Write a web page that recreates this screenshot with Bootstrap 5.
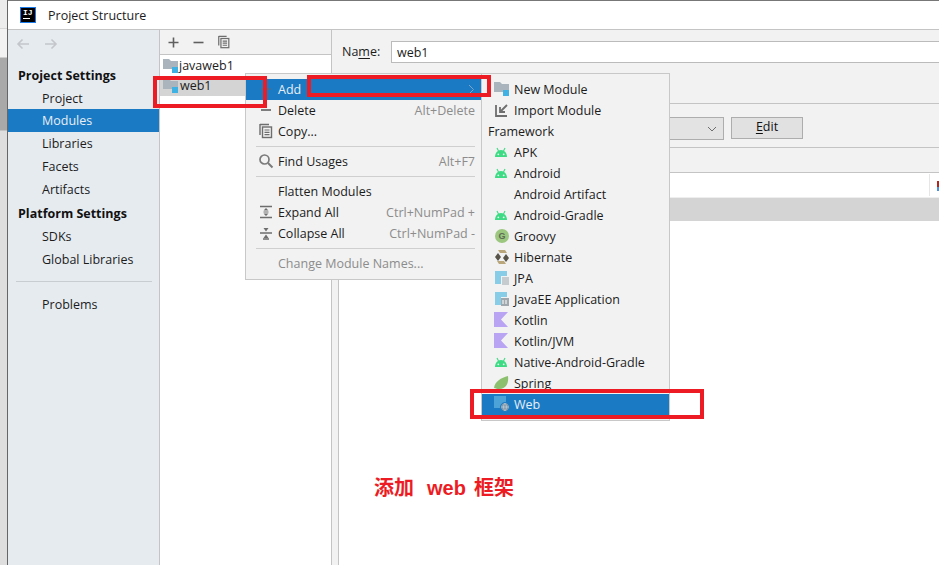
<!DOCTYPE html>
<html lang="en">
<head>
<meta charset="utf-8">
<title>Project Structure</title>
<link href="https://cdn.jsdelivr.net/npm/bootstrap@5.3.0/dist/css/bootstrap.min.css" rel="stylesheet">
<style>
html,body{height:565px;overflow:hidden}
body{font-family:"Open Sans","Noto Sans",sans-serif;font-size:12.5px;line-height:21px;color:#1c1c1c;background:#fff;position:relative}
.frame{height:565px}
.edge{width:8px;flex:none;border-right:1px solid #666;background:linear-gradient(#ececec 0,#ececec 28px,#bbb 28px,#f2f2f2 29px,#f2f2f2 57px,#a9a9a9 58px,#a9a9a9 130px,#dedede 131px)}
.win{min-width:0}
.titlebar{height:30px;flex:none;background:#fff;border-top:1px solid #777;border-bottom:1px solid #c4c4c4;padding-left:12px;gap:12px}
.ij{width:16px;height:16px;background:#000;border:1px solid #1a7bea;color:#fff;font:bold 8px/9px "Liberation Mono",monospace;padding:0 0 0 2px;position:relative;flex:none}
.ij::after{content:"";position:absolute;left:2px;top:10px;width:7px;height:1px;background:#fff}
.sidenav{width:152px;flex:none;background:#e6ebf0;border-right:1px solid #c4c4c4}
.arrows{height:28px;padding-left:8px;gap:14px}
.sidenav .group{font-weight:700;padding-left:10px;height:23px;line-height:23px;color:#111}
.sidenav .group.first{margin-top:6px}
.sidenav .group.second{height:24px;line-height:25px}
.sidenav .item{height:23px;line-height:23px;padding:0 0 0 34px;border:0;background:transparent;color:#1c1c1c;font-size:12.5px;border-radius:0}
.sidenav .item.active{background:#1a7bc4;color:#e8eef4}
.sep{height:1px;background:#c8cdd2;margin:10px 7px 11px 8px}
.treepane{width:172px;flex:none;background:#fff;border-right:1px solid #c4c4c4}
.treebar{height:25px;flex:none;background:#f2f2f2;border-bottom:1px solid #c4c4c4;padding-left:7px;gap:12px}
.treerow{height:20px;padding-left:3px;line-height:20px}
.treerow.sel{background:#d4d4d4}
.treerow.sel span{margin-left:1px}
.javarow{margin-top:1px}
.detail{min-width:0;background:#f2f2f2}
.namerow{height:74px;flex:none;border-bottom:1px solid #c4c4c4;padding:11px 0 0 10px}
.namerow label{width:49px;flex:none;line-height:21px}
.nameinput{height:22px;border:1px solid #bbb;border-right:0;border-radius:0;padding:0 5px;font-size:12.5px;color:#1c1c1c;background:#fff;box-shadow:none}
.panel{margin-left:6px;border-left:1px solid #c4c4c4}
.sdkrow{height:44px;flex:none;border-bottom:1px solid #c4c4c4;padding-top:13px;gap:7px;justify-content:flex-end;padding-right:136px}
.combo{width:200px;height:23px;background:#e3e3e3;border:1px solid #adadad;padding-right:6px}
.editbtn{width:72px;height:22px;padding:0 0 2px;background:#e1e1e1;border:1px solid #adadad;border-radius:0;color:#111;font-size:12.5px;line-height:18px}
.colhead{height:25px;flex:none;border-bottom:1px solid #c4c4c4}
.tablearea{background:#fff}
.trow{height:25px;flex:none;border-bottom:1px solid #eee;padding-right:9px}
.trow .tick{width:1px;height:22px;background:#e6e6e6}
.trow .flag{position:absolute;right:0;top:8px;width:2px;height:10px;background:linear-gradient(#b3261e 60%,#4a90d9 60%)}
.srow{height:23px;flex:none;background:#d4d4d4}
.ctx{position:absolute;margin:0;padding:5px 0 0;border-radius:0;border:1px solid #c8c8c8;background:#f2f2f2;min-width:0;font-size:12.5px;line-height:21px;color:#1c1c1c;z-index:5}
.ctx-main{left:245px;top:73px;width:237px;height:207px}
.ctx-sub{left:481px;top:73px;width:189px;height:348px}
.ctx .dropdown-item{height:21px;line-height:21px;padding:0 6px 0 32px;position:relative;color:#1c1c1c;font-size:12.5px;display:flex;justify-content:space-between}
.ctx .dropdown-item.active{background:#1a7bc4;color:#e8eef4}
.ctx .dropdown-item.disabled{color:#8c8c8c;background:transparent}
.ctx .dropdown-item:hover{background:transparent}
.ctx .dropdown-item.active:hover{background:#1a7bc4}
.ctx .dropdown-divider{margin:4px 0 4px 10px;width:219px;border-color:#cfcfcf;opacity:1;height:0}
.ctx .dropdown-header{padding:0 0 0 6px;height:21px;line-height:21px;color:#1c1c1c;font-size:12.5px}
.keys{color:#8c8c8c}
.ico{position:absolute;left:12px;top:2px}
.mark-rect{position:absolute;border:4px solid #ed1c24;z-index:6}
.r1{left:153px;top:76px;width:114px;height:32px}
.r2{left:307px;top:75px;width:184px;height:22px}
.r3{left:470px;top:389px;width:234px;height:30px}
.note{position:absolute;left:374px;top:475px;z-index:6;color:#ed1c24;font:700 20px/26px "Liberation Sans","Noto Sans CJK SC",sans-serif;white-space:nowrap}
.note .gap1{margin-left:13px}
.note .gap2{margin-left:8px}
u{text-underline-offset:2px}
</style>
</head>
<body>
<svg width="0" height="0" class="position-absolute">
  <defs>
    <symbol id="folder" viewBox="0 0 16 16"><path d="M0 1h6l2 2h7v8H0z" fill="#a9b4bd"/><rect x="9" y="9" width="6" height="6" fill="#3fb1e3"/></symbol>
    <symbol id="android" viewBox="0 0 16 16"><path d="M1 13c0-4 2.500-7 6-7s6 3 6 7z" fill="#3ddc84"/><path d="M3 4l1.500 3M11 4L9.500 7" stroke="#3ddc84" stroke-width="1.100"/><circle cx="4.300" cy="10.300" r=".9" fill="#f2f2f2"/><circle cx="9.700" cy="10.300" r=".9" fill="#f2f2f2"/></symbol>
    <symbol id="kotlin" viewBox="0 0 16 16"><path d="M0 0h14L7 7.500 14 15H0z" fill="#b9a4f3"/></symbol>
    <symbol id="copy" viewBox="0 0 16 16"><path d="M2 1.500h9M2 1v11" stroke="#6e6e6e" stroke-width="1.400" fill="none"/><rect x="4.500" y="4" width="9" height="10.500" fill="#f2f2f2" stroke="#6e6e6e" stroke-width="1.400"/><path d="M6.500 7h5M6.500 9.300h5M6.500 11.600h5" stroke="#6e6e6e" stroke-width="1.200"/></symbol>
  </defs>
</svg>

<div class="frame d-flex">
  <div class="edge"></div>
  <div class="win flex-fill d-flex flex-column">
    <div class="titlebar d-flex align-items-center">
      <div class="ij">IJ</div>
      <span>Project Structure</span>
    </div>
    <div class="d-flex flex-fill overflow-hidden">
      <nav class="sidenav d-flex flex-column">
        <div class="arrows d-flex align-items-center">
          <svg width="14" height="12" viewBox="0 0 14 12"><path d="M13 6H2M6.500 1.500L2 6l4.500 4.500" fill="none" stroke="#c3c7cb" stroke-width="1.600"/></svg>
          <svg width="14" height="12" viewBox="0 0 14 12"><path d="M1 6h11M7.500 1.500L12 6l-4.500 4.500" fill="none" stroke="#c3c7cb" stroke-width="1.600"/></svg>
        </div>
        <div class="group first">Project Settings</div>
        <div class="list-group list-group-flush">
          <a class="list-group-item item">Project</a>
          <a class="list-group-item item active">Modules</a>
          <a class="list-group-item item">Libraries</a>
          <a class="list-group-item item">Facets</a>
          <a class="list-group-item item">Artifacts</a>
        </div>
        <div class="group second">Platform Settings</div>
        <div class="list-group list-group-flush">
          <a class="list-group-item item">SDKs</a>
          <a class="list-group-item item">Global Libraries</a>
        </div>
        <div class="sep"></div>
        <a class="list-group-item item">Problems</a>
      </nav>
      <div class="treepane d-flex flex-column">
        <div class="treebar d-flex align-items-center">
          <svg width="13" height="13" viewBox="0 0 13 13"><path d="M6.500 1.500v10M1.500 6.500h10" stroke="#5f5f5f" stroke-width="1.600"/></svg>
          <svg width="13" height="13" viewBox="0 0 13 13"><path d="M1.500 6.500h10" stroke="#5f5f5f" stroke-width="1.600"/></svg>
          <svg width="14" height="14" viewBox="0 0 16 16"><use href="#copy"/></svg>
        </div>
        <div class="treerow javarow d-flex align-items-center"><svg width="16" height="16"><use href="#folder"/></svg><span>javaweb1</span></div>
        <div class="treerow sel d-flex align-items-center"><svg width="16" height="16"><use href="#folder"/></svg><span>web1</span></div>
      </div>
      <div class="detail flex-fill d-flex flex-column">
        <div class="namerow d-flex align-items-start">
          <label>Na<u>m</u>e:</label>
          <input class="form-control nameinput" value="web1">
        </div>
        <div class="panel flex-fill d-flex flex-column">
          <div class="sdkrow d-flex align-items-start">
            <div class="combo d-flex align-items-center justify-content-end"><svg width="10" height="6" viewBox="0 0 10 6"><path d="M1 1l4 4 4-4" fill="none" stroke="#6e6e6e" stroke-width="1"/></svg></div>
            <button class="btn editbtn" type="button"><u>E</u>dit</button>
          </div>
          <div class="colhead"></div>
          <div class="tablearea flex-fill d-flex flex-column">
            <div class="trow d-flex justify-content-end align-items-center position-relative"><div class="tick"></div><div class="flag"></div></div>
            <div class="srow"></div>
          </div>
        </div>
      </div>
    </div>
  </div>
</div>

<div class="dropdown-menu show ctx ctx-main">
  <a class="dropdown-item active"><svg class="ico" width="16" height="16" viewBox="0 0 16 16"><path d="M8 3v10M3 8h10" stroke="#4a6d8c" stroke-width="1.500"/></svg>Add<svg class="align-self-center" width="7" height="11" viewBox="0 0 7 11"><path d="M1 1l4.500 4.500L1 10" fill="none" stroke="#7aa5c9" stroke-width="1"/></svg></a>
  <a class="dropdown-item"><svg class="ico" width="16" height="16" viewBox="0 0 16 16"><path d="M3 8h10" stroke="#5f5f5f" stroke-width="1.600"/></svg>Delete<span class="keys">Alt+Delete</span></a>
  <a class="dropdown-item"><svg class="ico" width="16" height="16" viewBox="0 0 16 16"><use href="#copy"/></svg>Copy...</a>
  <hr class="dropdown-divider">
  <a class="dropdown-item"><svg class="ico" width="16" height="16" viewBox="0 0 16 16"><circle cx="6.500" cy="6.500" r="4.500" fill="none" stroke="#7a7a7a" stroke-width="1.700"/><path d="M10 10l4.500 4.500" stroke="#7a7a7a" stroke-width="2"/></svg>Find Usages<span class="keys">Alt+F7</span></a>
  <hr class="dropdown-divider">
  <a class="dropdown-item">Flatten Modules</a>
  <a class="dropdown-item"><svg class="ico" width="16" height="16" viewBox="0 0 16 16"><path d="M2 2.500h12M2 13.500h12" stroke="#6e6e6e" stroke-width="1.400"/><path d="M8 4l2.500 2.500h-5zM8 12L5.500 9.500h5z" fill="#6e6e6e"/><path d="M5.500 8h5" stroke="#6e6e6e"/></svg>Expand All<span class="keys">Ctrl+NumPad +</span></a>
  <a class="dropdown-item"><svg class="ico" width="16" height="16" viewBox="0 0 16 16"><path d="M2 8h12M5 14h6" stroke="#6e6e6e" stroke-width="1.400"/><path d="M8 6.500L5.500 3h5zM8 9.500l2.500 3.500h-5z" fill="#6e6e6e"/></svg>Collapse All<span class="keys">Ctrl+NumPad -</span></a>
  <hr class="dropdown-divider">
  <a class="dropdown-item disabled">Change Module Names...</a>
</div>

<div class="dropdown-menu show ctx ctx-sub">
  <a class="dropdown-item"><svg class="ico" width="16" height="16"><use href="#folder"/></svg>New Module</a>
  <a class="dropdown-item"><svg class="ico" width="16" height="16" viewBox="0 0 16 16"><path d="M2 3v11h11" fill="none" stroke="#6e6e6e" stroke-width="1.800"/><path d="M13 3L6 10M6 5v5h5" fill="none" stroke="#6e6e6e" stroke-width="1.800"/></svg>Import Module</a>
  <h6 class="dropdown-header">Framework</h6>
  <a class="dropdown-item"><svg class="ico" width="16" height="16"><use href="#android"/></svg>APK</a>
  <a class="dropdown-item"><svg class="ico" width="16" height="16"><use href="#android"/></svg>Android</a>
  <a class="dropdown-item">Android Artifact</a>
  <a class="dropdown-item"><svg class="ico" width="16" height="16"><use href="#android"/></svg>Android-Gradle</a>
  <a class="dropdown-item"><svg class="ico" width="16" height="16" viewBox="0 0 16 16"><circle cx="8" cy="8" r="7" fill="#9cc77f"/><text x="8" y="11" text-anchor="middle" font-family="Liberation Sans" font-weight="700" font-size="9" fill="#5d6b55">G</text></svg>Groovy</a>
  <a class="dropdown-item"><svg class="ico" width="16" height="16" viewBox="0 0 16 16"><path d="M4 1h7l2 3H6z" fill="#b9a67a"/><path d="M3 12h7l2 3H5z" fill="#b9a67a"/><path d="M4 4L1 8l3 4 3-4z" fill="#59544a"/><path d="M12 5l-3 4 3 4 3-4z" fill="#59544a"/></svg>Hibernate</a>
  <a class="dropdown-item"><svg class="ico" width="16" height="16" viewBox="0 0 16 16"><path d="M1 1h12v5H7v8H1z" fill="#87cde8"/><path d="M8 8h7M8 10h7M8 12h7M8 14h7" stroke="#9aa4ab" stroke-width="1"/></svg>JPA</a>
  <a class="dropdown-item"><svg class="ico" width="16" height="16" viewBox="0 0 16 16"><path d="M1 1h12v5H7v8H1z" fill="#87cde8"/><rect x="7" y="7" width="8" height="8" fill="#a0a8ae"/><path d="M9 9v4M12 9v4" stroke="#fff"/></svg>JavaEE Application</a>
  <a class="dropdown-item"><svg class="ico" width="16" height="16"><use href="#kotlin"/></svg>Kotlin</a>
  <a class="dropdown-item"><svg class="ico" width="16" height="16"><use href="#kotlin"/></svg>Kotlin/JVM</a>
  <a class="dropdown-item"><svg class="ico" width="16" height="16"><use href="#android"/></svg>Native-Android-Gradle</a>
  <a class="dropdown-item"><svg class="ico" width="16" height="16" viewBox="0 0 16 16"><path d="M0 13C1 6 7 3 14 1c1 7-2 13-9 13-2 0-3-.5-5-1z" fill="#8cc06f"/></svg>Spring</a>
  <a class="dropdown-item active"><svg class="ico" width="16" height="16" viewBox="0 0 16 16"><rect x="0" y="0" width="12" height="12" fill="#4ba3d8"/><circle cx="11" cy="11" r="4.500" fill="#7f97aa" stroke="#1a7bc4"/><path d="M7 11h8M11 7c-2 2.500-2 5.500 0 8M11 7c2 2.500 2 5.500 0 8" fill="none" stroke="#c9d6e0" stroke-width=".6"/></svg>Web</a>
</div>

<div class="mark-rect r1"></div>
<div class="mark-rect r2"></div>
<div class="mark-rect r3"></div>
<div class="note">添加<span class="gap1">web</span><span class="gap2">框架</span></div>
<script src="https://cdn.jsdelivr.net/npm/bootstrap@5.3.0/dist/js/bootstrap.bundle.min.js"></script>
</body>
</html>
